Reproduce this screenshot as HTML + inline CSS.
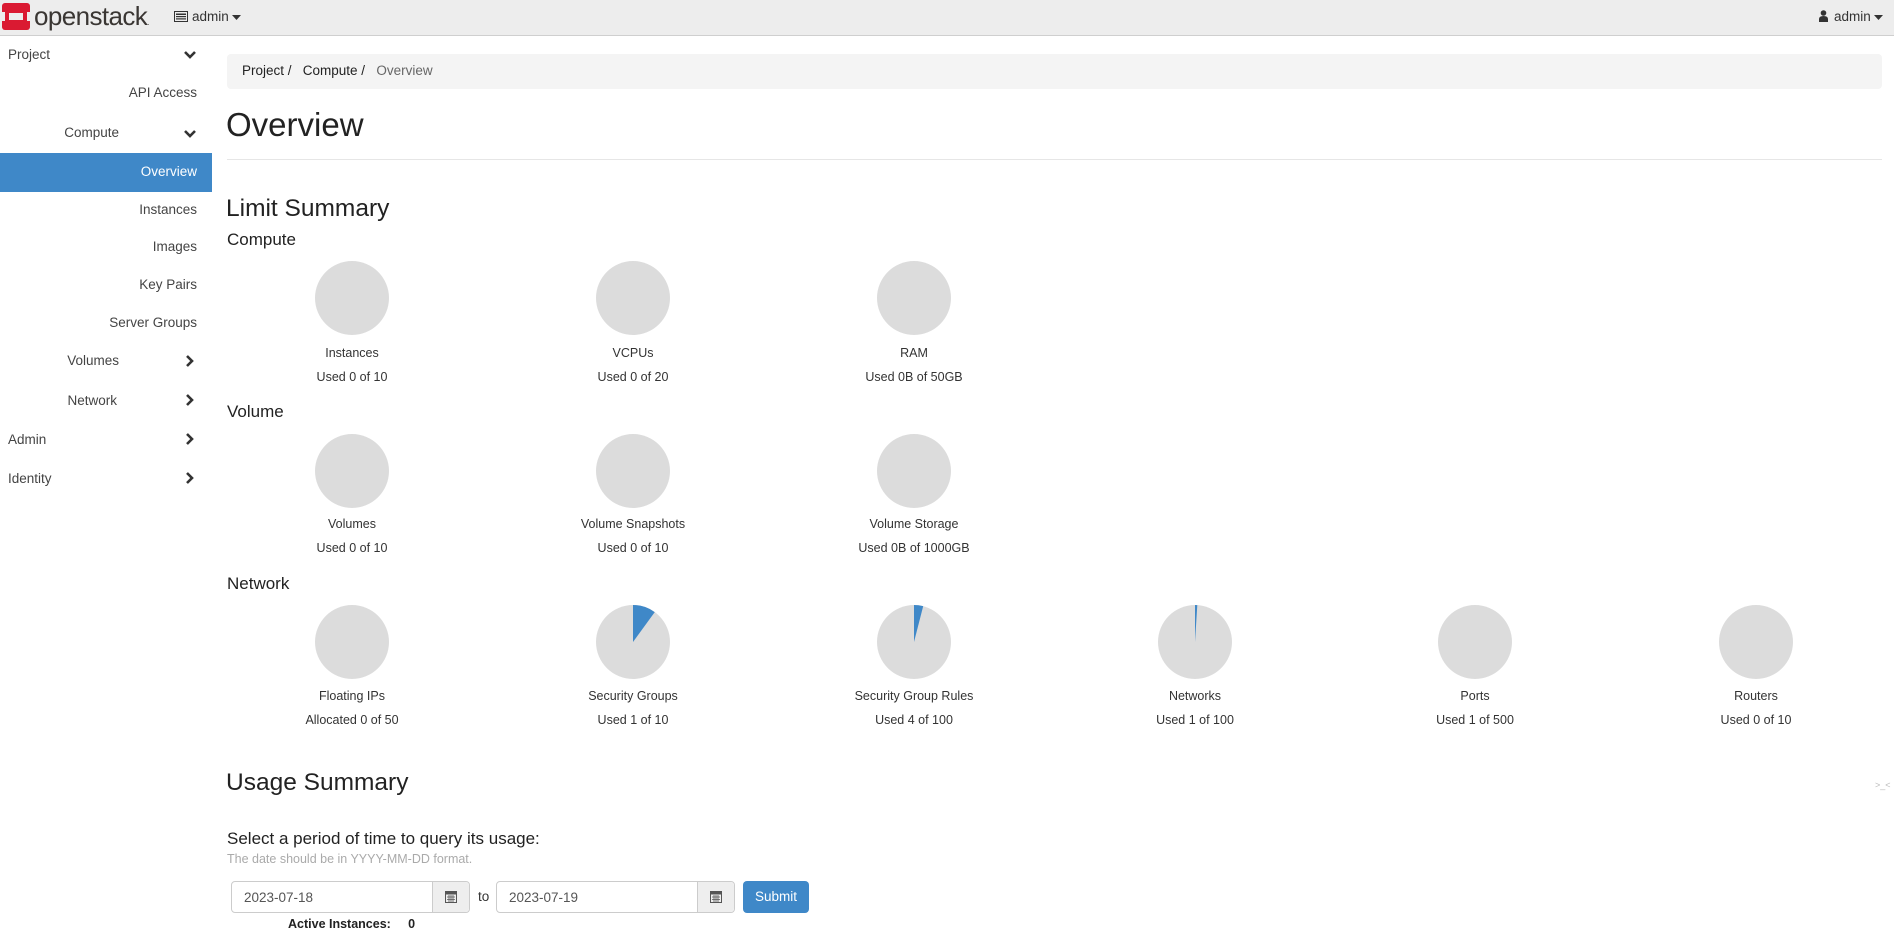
<!DOCTYPE html>
<html><head><meta charset="utf-8"><style>
*{box-sizing:border-box;margin:0;padding:0}
body{width:1894px;height:923px;overflow:hidden;background:#fff;font-family:"Liberation Sans",sans-serif;color:#333;position:relative}
.nav{position:absolute;left:0;top:0;width:1894px;height:36px;background:#ededed;border-bottom:1px solid #cfcfcf}
.abs{position:absolute;white-space:nowrap}
.side{font-size:13.5px;color:#444}
.act{position:absolute;left:0;top:153px;width:212px;height:39px;background:#3f88c8}
.chev{position:absolute;width:14px;height:14px}
.bc{position:absolute;left:227px;top:54px;width:1655px;height:35px;background:#f4f4f4;border-radius:4px;font-size:13.5px;color:#222}
.hr{position:absolute;left:227px;top:159px;width:1655px;height:1px;background:#e6e6e6}
.pie{position:absolute;width:74px;height:74px;border-radius:50%;background:#dcdcdc}
.lbl{position:absolute;width:280px;text-align:center;font-size:12.5px;color:#333}
.inp{position:absolute;height:32px;border:1px solid #ccc;border-radius:4px;background:#fff;font-size:13.5px;color:#555}
.addon{position:absolute;right:0;top:0;width:37px;height:30px;background:#eee;border-left:1px solid #ccc;border-radius:0 4px 4px 0}
</style></head><body>
<div class="nav">
 <svg class="abs" style="left:2px;top:3px" width="28" height="27" viewBox="0 0 28 27"><rect x="0" y="0" width="28" height="27" rx="3" fill="#da1a32"/><rect x="0" y="9" width="3" height="9" fill="#ededed"/><rect x="25" y="9" width="3" height="9" fill="#ededed"/><rect x="7" y="10" width="14" height="7" fill="#ededed"/></svg>
 <div class="abs" style="left:34px;top:1px;font-size:26px;color:#3a3633;letter-spacing:-0.6px">openstack<span style="font-size:8px">.</span></div>
 <svg class="abs" style="left:174px;top:11px" width="14" height="11" viewBox="0 0 14 11"><rect x="0.5" y="0.5" width="13" height="10" fill="none" stroke="#333"/><rect x="2" y="2.5" width="10" height="1.5" fill="#333"/><rect x="2" y="5" width="10" height="1.2" fill="#333"/><rect x="2" y="7.3" width="10" height="1.2" fill="#333"/></svg>
 <div class="abs" style="left:192px;top:9px;font-size:13.5px;color:#333">admin</div>
 <svg class="abs" style="left:232px;top:15px" width="9" height="5"><path d="M0 0h9L4.5 5z" fill="#333"/></svg>
 <svg class="abs" style="left:1819px;top:10px" width="9" height="12" viewBox="0 0 9 12"><circle cx="4.5" cy="3" r="2.8" fill="#333"/><path d="M0 12V9q0-3 4.5-3T9 9v3z" fill="#333"/></svg>
 <div class="abs" style="left:1834px;top:9px;font-size:13.5px;color:#333">admin</div>
 <svg class="abs" style="left:1874px;top:15px" width="9" height="5"><path d="M0 0h9L4.5 5z" fill="#333"/></svg>
</div>

<div class="act"></div>
<div class="abs side" style="left:8px;top:47px">Project</div>
<div class="abs side" style="right:1697px;top:85px">API Access</div>
<div class="abs side" style="right:1775px;top:125px">Compute</div>
<div class="abs side" style="right:1697px;top:164px;color:#fff">Overview</div>
<div class="abs side" style="right:1697px;top:202px">Instances</div>
<div class="abs side" style="right:1697px;top:239px">Images</div>
<div class="abs side" style="right:1697px;top:277px">Key Pairs</div>
<div class="abs side" style="right:1697px;top:315px">Server Groups</div>
<div class="abs side" style="right:1775px;top:353px">Volumes</div>
<div class="abs side" style="right:1777px;top:393px">Network</div>
<div class="abs side" style="left:8px;top:432px">Admin</div>
<div class="abs side" style="left:8px;top:471px">Identity</div>
<svg class="chev" style="left:183px;top:48px" viewBox="0 0 14 14"><path d="M2 4l5 5 5-5" fill="none" stroke="#333" stroke-width="2.6"/></svg>
<svg class="chev" style="left:183px;top:127px" viewBox="0 0 14 14"><path d="M2 4l5 5 5-5" fill="none" stroke="#333" stroke-width="2.6"/></svg>
<svg class="chev" style="left:183px;top:354px" viewBox="0 0 14 14"><path d="M4 2l5 5-5 5" fill="none" stroke="#333" stroke-width="2.6"/></svg>
<svg class="chev" style="left:183px;top:393px" viewBox="0 0 14 14"><path d="M4 2l5 5-5 5" fill="none" stroke="#333" stroke-width="2.6"/></svg>
<svg class="chev" style="left:183px;top:432px" viewBox="0 0 14 14"><path d="M4 2l5 5-5 5" fill="none" stroke="#333" stroke-width="2.6"/></svg>
<svg class="chev" style="left:183px;top:471px" viewBox="0 0 14 14"><path d="M4 2l5 5-5 5" fill="none" stroke="#333" stroke-width="2.6"/></svg>

<div class="bc"><span class="abs" style="left:15px;top:9px">Project&nbsp;/&nbsp;&nbsp; Compute&nbsp;/&nbsp;&nbsp; <span style="color:#666">Overview</span></span></div>
<div class="abs" style="left:226px;top:106px;font-size:33px;color:#222">Overview</div>
<div class="hr"></div>
<div class="abs" style="left:226px;top:195px;font-size:24.5px;color:#222">Limit Summary</div>
<div class="abs" style="left:227px;top:230px;font-size:17px;color:#222">Compute</div>
<div class="abs" style="left:227px;top:402px;font-size:17px;color:#222">Volume</div>
<div class="abs" style="left:227px;top:574px;font-size:17px;color:#222">Network</div>

<div class="pie" style="left:315px;top:261px"></div>
<div class="pie" style="left:596px;top:261px"></div>
<div class="pie" style="left:877px;top:261px"></div>
<div class="lbl" style="left:212px;top:346px">Instances</div><div class="lbl" style="left:212px;top:370px">Used 0 of 10</div>
<div class="lbl" style="left:493px;top:346px">VCPUs</div><div class="lbl" style="left:493px;top:370px">Used 0 of 20</div>
<div class="lbl" style="left:774px;top:346px">RAM</div><div class="lbl" style="left:774px;top:370px">Used 0B of 50GB</div>
<div class="pie" style="left:315px;top:434px"></div>
<div class="pie" style="left:596px;top:434px"></div>
<div class="pie" style="left:877px;top:434px"></div>
<div class="lbl" style="left:212px;top:517px">Volumes</div><div class="lbl" style="left:212px;top:541px">Used 0 of 10</div>
<div class="lbl" style="left:493px;top:517px">Volume Snapshots</div><div class="lbl" style="left:493px;top:541px">Used 0 of 10</div>
<div class="lbl" style="left:774px;top:517px">Volume Storage</div><div class="lbl" style="left:774px;top:541px">Used 0B of 1000GB</div>
<div class="pie" style="left:315px;top:605px"></div>
<svg class="abs" style="left:596px;top:605px" width="74" height="74" viewBox="-37 -37 74 74"><circle r="37" fill="#dcdcdc"/><path d="M0 0V-37A37 37 0 0 1 21.75 -29.93z" fill="#3f88c8"/></svg>
<svg class="abs" style="left:877px;top:605px" width="74" height="74" viewBox="-37 -37 74 74"><circle r="37" fill="#dcdcdc"/><path d="M0 0V-37A37 37 0 0 1 9.2 -35.84z" fill="#3f88c8"/></svg>
<svg class="abs" style="left:1158px;top:605px" width="74" height="74" viewBox="-37 -37 74 74"><circle r="37" fill="#dcdcdc"/><path d="M0 0V-37A37 37 0 0 1 2.32 -36.93z" fill="#3f88c8"/></svg>
<div class="pie" style="left:1438px;top:605px"></div>
<div class="pie" style="left:1719px;top:605px"></div>
<div class="lbl" style="left:212px;top:689px">Floating IPs</div><div class="lbl" style="left:212px;top:713px">Allocated 0 of 50</div>
<div class="lbl" style="left:493px;top:689px">Security Groups</div><div class="lbl" style="left:493px;top:713px">Used 1 of 10</div>
<div class="lbl" style="left:774px;top:689px">Security Group Rules</div><div class="lbl" style="left:774px;top:713px">Used 4 of 100</div>
<div class="lbl" style="left:1055px;top:689px">Networks</div><div class="lbl" style="left:1055px;top:713px">Used 1 of 100</div>
<div class="lbl" style="left:1335px;top:689px">Ports</div><div class="lbl" style="left:1335px;top:713px">Used 1 of 500</div>
<div class="lbl" style="left:1616px;top:689px">Routers</div><div class="lbl" style="left:1616px;top:713px">Used 0 of 10</div>

<div class="abs" style="left:226px;top:769px;font-size:24.5px;color:#222">Usage Summary</div>
<div class="abs" style="left:227px;top:829px;font-size:17px;color:#222">Select a period of time to query its usage:</div>
<div class="abs" style="left:227px;top:852px;font-size:12.5px;color:#aaa">The date should be in YYYY-MM-DD format.</div>
<div class="inp" style="left:231px;top:881px;width:239px"><span class="abs" style="left:12px;top:8px">2023-07-18</span><div class="addon"><svg class="abs" style="left:12px;top:8px" width="12" height="13" viewBox="0 0 12 13"><rect x="0.5" y="1.5" width="11" height="11" fill="none" stroke="#555"/><rect x="0.5" y="1.5" width="11" height="3" fill="#555"/><path d="M2 7h8M2 9.5h8M4 5v7M6 5v7M8 5v7" stroke="#555" stroke-width="0.8"/></svg></div></div>
<div class="abs" style="left:478px;top:889px;font-size:13.5px;color:#333">to</div>
<div class="inp" style="left:496px;top:881px;width:239px"><span class="abs" style="left:12px;top:8px">2023-07-19</span><div class="addon"><svg class="abs" style="left:12px;top:8px" width="12" height="13" viewBox="0 0 12 13"><rect x="0.5" y="1.5" width="11" height="11" fill="none" stroke="#555"/><rect x="0.5" y="1.5" width="11" height="3" fill="#555"/><path d="M2 7h8M2 9.5h8M4 5v7M6 5v7M8 5v7" stroke="#555" stroke-width="0.8"/></svg></div></div>
<div class="abs" style="left:743px;top:881px;width:66px;height:32px;background:#3f88c8;border-radius:4px;color:#fff;font-size:13.5px;text-align:center;line-height:31px">Submit</div>
<div class="abs" style="left:288px;top:917px;font-size:12.5px;color:#222;font-weight:bold">Active Instances: &nbsp;&nbsp;&nbsp; 0</div>
<div class="abs" style="left:1875px;top:780px;font-size:9px;color:#bbb">&gt;_&lt;</div>
</body></html>
